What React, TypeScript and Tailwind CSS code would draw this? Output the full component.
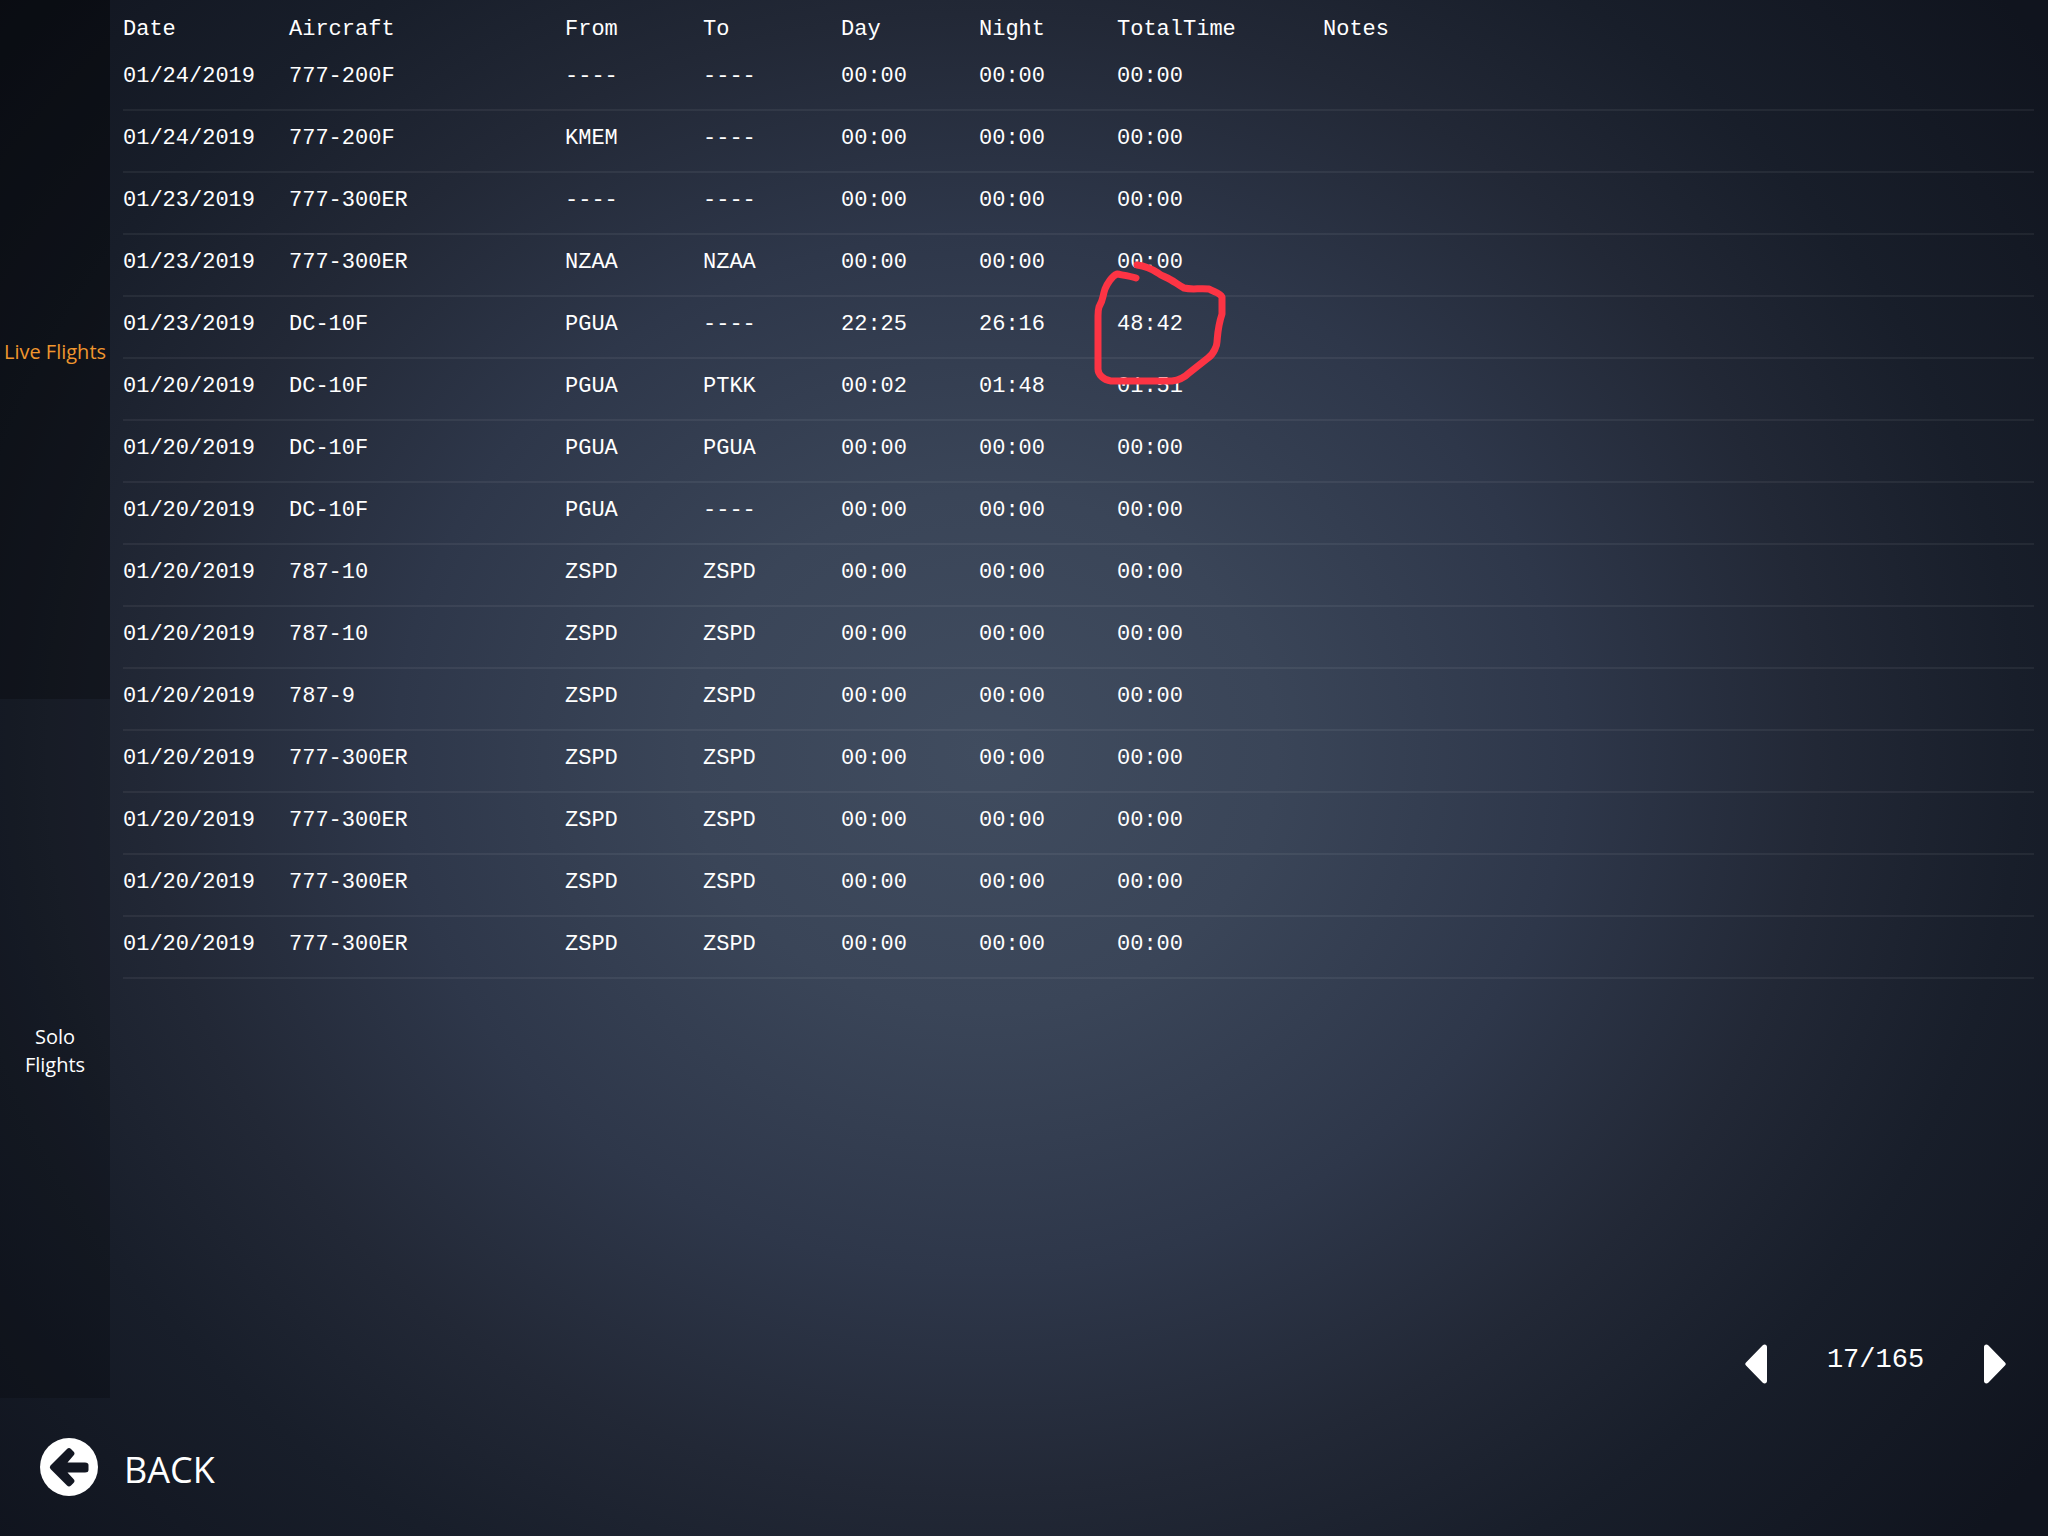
import React from "react";

type Flight = [string, string, string, string, string, string, string];

const headers = ["Date", "Aircraft", "From", "To", "Day", "Night", "TotalTime", "Notes"];

const z = "00:00";
const none = "----";

const flights: Flight[] = [
  ["01/24/2019", "777-200F", none, none, z, z, z],
  ["01/24/2019", "777-200F", "KMEM", none, z, z, z],
  ["01/23/2019", "777-300ER", none, none, z, z, z],
  ["01/23/2019", "777-300ER", "NZAA", "NZAA", z, z, z],
  ["01/23/2019", "DC-10F", "PGUA", none, "22:25", "26:16", "48:42"],
  ["01/20/2019", "DC-10F", "PGUA", "PTKK", "00:02", "01:48", "01:51"],
  ["01/20/2019", "DC-10F", "PGUA", "PGUA", z, z, z],
  ["01/20/2019", "DC-10F", "PGUA", none, z, z, z],
  ["01/20/2019", "787-10", "ZSPD", "ZSPD", z, z, z],
  ["01/20/2019", "787-10", "ZSPD", "ZSPD", z, z, z],
  ["01/20/2019", "787-9", "ZSPD", "ZSPD", z, z, z],
  ["01/20/2019", "777-300ER", "ZSPD", "ZSPD", z, z, z],
  ["01/20/2019", "777-300ER", "ZSPD", "ZSPD", z, z, z],
  ["01/20/2019", "777-300ER", "ZSPD", "ZSPD", z, z, z],
  ["01/20/2019", "777-300ER", "ZSPD", "ZSPD", z, z, z],
];

function Circled({ children }: { children: React.ReactNode }) {
  return (
    <span className="relative">
      {children}
      <svg
        className="pointer-events-none absolute -top-[60px] -left-[30px] z-10 h-[140px] w-[150px]"
        viewBox="0 0 150 140"
        fill="none"
        stroke="#fc3444"
        strokeWidth="7"
        strokeLinecap="round"
        strokeLinejoin="round"
        aria-hidden="true"
      >
        <path d="M49 26C43 24 35 23 30 22C25 24 20 32 18 37C15 46 17 46 12 55C11 58 11 60 11 64V117C11 122 16 128 24 129H85C93 128 98 125 102 121L121 106C127 102 130 93 130 90C131 78 131 74 135 62V45C133 41 127 40 122 37C112 36 105 38 97 36C91 33 88 30 84 28C78 24 76 25 71 21C65 17 58 14 50 13" />
      </svg>
    </span>
  );
}

function Triangle({ flip = false }: { flip?: boolean }) {
  return (
    <svg
      className={flip ? "h-10 w-[22px] rotate-180" : "h-10 w-[22px]"}
      viewBox="0 0 22 40"
      aria-hidden="true"
    >
      <path d="M1 18.5L17.5 1.5C19.5-.3 22 .6 22 3V37C22 39.4 19.5 40.3 17.5 38.5L1 21.5Q-.5 20 1 18.5Z" fill="#fff" />
    </svg>
  );
}

export default function App() {
  return (
    <div
      className="flex min-h-screen flex-col bg-[#0f131d] bg-[radial-gradient(ellipse_55%_65%_at_48%_49%,#404c5f_0%,#3a4558_26%,#2e374a_52%,#222836_74%,#181e2a_92%,#10141e_118%)] font-['Open_Sans','Noto_Sans',sans-serif] text-white"
    >
      <div className="flex min-h-[1398px] grow">
        <nav className="flex w-[110px] shrink-0 flex-col text-[20px] leading-7" aria-label="Flight type">
          <button className="flex-1 bg-black/40 pt-1 text-[#f0962e]" aria-current="page">
            Live Flights
          </button>
          <button className="flex-1 bg-black/20 px-4 pt-1">Solo Flights</button>
        </nav>
        <main className="flex min-w-0 grow flex-col justify-between">
          <div className="pr-[14px] pl-[13px]">
            <table className="w-full table-fixed text-left font-['Liberation_Mono',monospace] text-[22px] leading-7">
              <colgroup>
                <col className="w-[166px]" />
                <col className="w-[276px]" />
                <col className="w-[138px]" />
                <col className="w-[138px]" />
                <col className="w-[138px]" />
                <col className="w-[138px]" />
                <col className="w-[206px]" />
                <col />
              </colgroup>
              <thead>
                <tr className="h-12">
                  {headers.map((h) => (
                    <th key={h} scope="col" className="p-0 pb-1 align-bottom font-normal">
                      {h}
                    </th>
                  ))}
                </tr>
              </thead>
              <tbody>
                {flights.map((row, i) => (
                  <tr key={i} className="h-[62px] border-b-2 border-white/6">
                    {row.map((cell, j) => (
                      <td key={j} className="p-0 pb-1">
                        {cell === "48:42" ? <Circled>{cell}</Circled> : cell}
                      </td>
                    ))}
                    <td />
                  </tr>
                ))}
              </tbody>
            </table>
          </div>
          <div className="flex items-center justify-end pr-[42px] pb-[14px]">
            <button aria-label="Previous page">
              <Triangle />
            </button>
            <span className="w-[217px] pb-2 text-center font-['Liberation_Mono',monospace] text-[27px] leading-8">
              17/165
            </span>
            <button aria-label="Next page">
              <Triangle flip />
            </button>
          </div>
        </main>
      </div>
      <footer className="flex h-[138px] shrink-0 items-center pl-10">
        <button className="flex items-center gap-[26px] text-[36px] leading-[48px]">
          <svg className="size-[58px]" viewBox="0 0 58 58" aria-hidden="true">
            <circle cx="29" cy="29" r="29" fill="#fff" />
            <path
              d="M10.5 27.5L27 11Q29 9 31 11L33.500 13.500Q35.500 15.500 33.500 17.500L27.500 24.500H45Q48.500 24.500 48.500 27V32Q48.500 34.500 45 34.500H27.500L33.500 41Q35.500 43 33.500 45L31 47.500Q29 49.500 27 47.500L10.500 31Q9 29.300 10.500 27.500Z"
              fill="#131722"
            />
          </svg>
          <span className="pt-1.5">BACK</span>
        </button>
      </footer>
    </div>
  );
}
